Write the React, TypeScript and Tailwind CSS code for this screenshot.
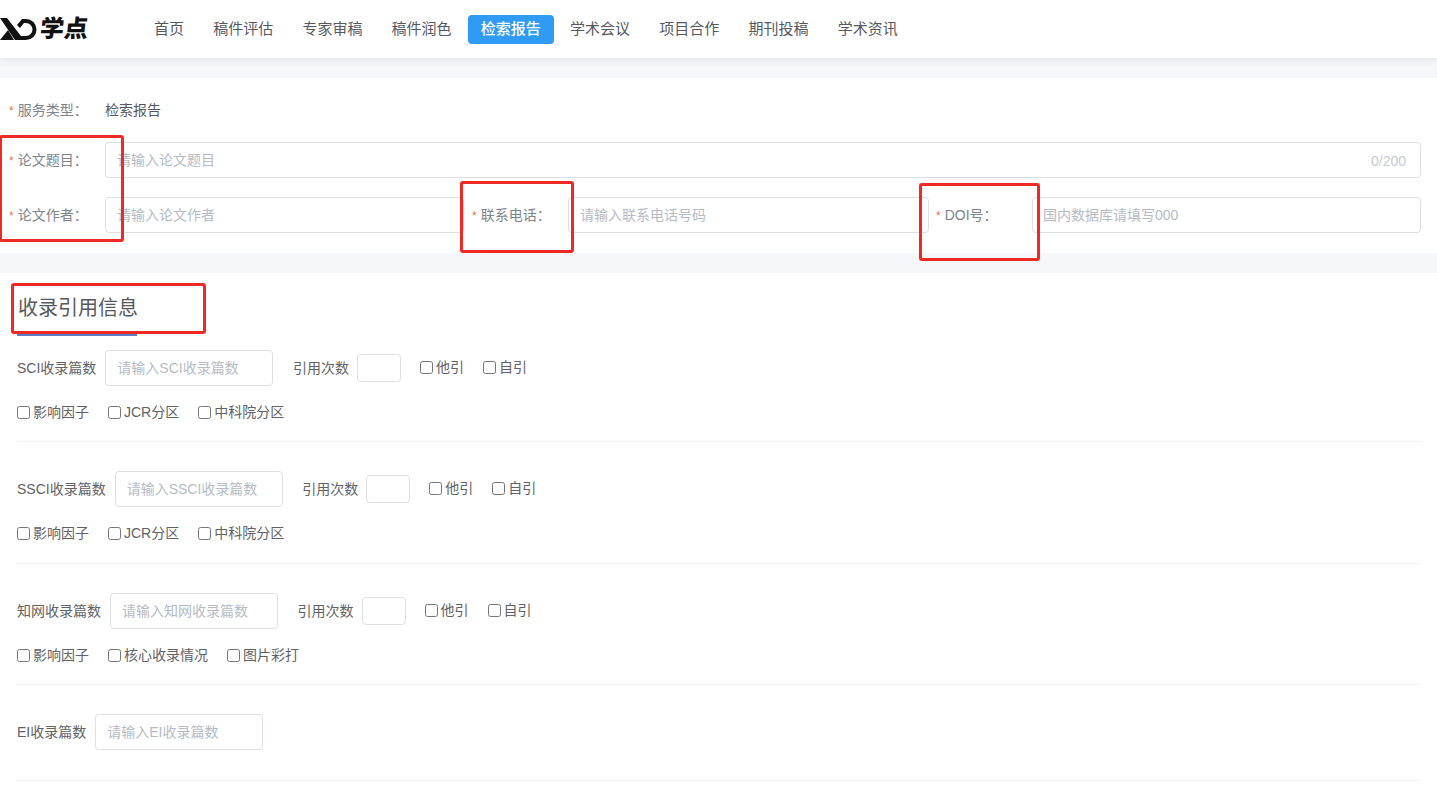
const navItems = ['首页', '稿件评估', '专家审稿', '稿件润色', '检索报告', '学术会议', '项目合作', '期刊投稿', '学术资讯']

interface IBlock {
    label: string
    placeholder: string
    checks: string[]
    bottom: string
}

const blocks: IBlock[] = [
    { label: 'SCI收录篇数', placeholder: '请输入SCI收录篇数', checks: ['影响因子', 'JCR分区', '中科院分区'], bottom: 'pb-[15px]' },
    { label: 'SSCI收录篇数', placeholder: '请输入SSCI收录篇数', checks: ['影响因子', 'JCR分区', '中科院分区'], bottom: 'pb-4' },
    { label: '知网收录篇数', placeholder: '请输入知网收录篇数', checks: ['影响因子', '核心收录情况', '图片彩打'], bottom: 'pb-[15px]' },
]

const inputClass =
    'h-9 rounded border border-[#dcdfe6] bg-white px-[11px] text-sm text-[#606266] outline-none placeholder:text-[#b4bbc4]'

function Logo() {
    return (
        <div className="flex items-center">
            <svg width="40" height="24" viewBox="0 0 40 24" aria-hidden="true">
                <path d="M0 1h7l17 22h-9z" fill="#111" />
                <path d="M0 23l8-10 6 10z" fill="#111" />
                <path d="M17 8l5-6h4a10.500 10.500 0 0 1 0 21h-5l-3-4h8a6.500 6.500 0 0 0 0-13h-2l-4 5z" fill="#111" />
            </svg>
            <span className="-skew-x-6 text-[24px] leading-none font-black text-[#111]">学点</span>
        </div>
    )
}

function Label({ text, width }: { text: string; width: string }) {
    return (
        <div className={`${width} shrink-0 text-sm text-[#7d848c]`}>
            <span className="mr-1 text-xs text-[#e8734a]">*</span>
            {text}：
        </div>
    )
}

function Check({ text }: { text: string }) {
    return (
        <label className="-mt-0.5 flex items-center gap-[3px] text-sm text-[#606266]">
            <input type="checkbox" className="m-0" />
            {text}
        </label>
    )
}

function Block({ label, placeholder, checks, bottom }: IBlock) {
    return (
        <div className={`mb-[29px] border-b border-dotted border-[#e4e7ed] ${bottom}`}>
            <div className="flex h-9 items-center text-sm text-[#606266]">
                <span>{label}</span>
                <input className={`${inputClass} ml-[9px] w-[168px]`} placeholder={placeholder} />
                <span className="ml-[19.6px]">引用次数</span>
                <input className="ml-2 h-7 w-11 rounded border border-[#dcdfe6] outline-none" />
                <div className="ml-[19px] flex gap-[19px]">
                    <Check text="他引" />
                    <Check text="自引" />
                </div>
            </div>
            <div className="mt-3.5 flex h-[26px] items-center gap-[19px]">
                {checks.map((c) => (
                    <Check key={c} text={c} />
                ))}
            </div>
        </div>
    )
}

function RedBox({ className }: { className: string }) {
    return <div className={`absolute rounded-[3px] border-[3px] border-[#ee2a24] ${className}`} />
}

export default function App() {
    return (
        <div className="relative min-h-[799px] overflow-hidden bg-white [font-family:'Liberation_Sans','Noto_Sans_CJK_SC',sans-serif]">
            <header className="relative flex h-[58px] items-center bg-white shadow-[0_2px_8px_rgba(0,0,0,0.08)]">
                <Logo />
                <nav className="ml-[53px] flex gap-[3.2px]">
                    {navItems.map((item) => (
                        <a
                            key={item}
                            className={`flex h-[29px] items-center rounded-sm px-[13px] text-[15px] ${
                                item === '检索报告' ? 'bg-[#2f9bf4] font-medium text-white' : 'text-[#55595f]'
                            }`}
                        >
                            {item}
                        </a>
                    ))}
                </nav>
            </header>
            <div className="h-5 bg-[#f5f7fa]" />

            <section className="pt-3.5 pr-4 pb-5 pl-[9px]">
                <div className="flex h-9 items-center">
                    <Label text="服务类型" width="w-[96px]" />
                    <span className="text-sm text-[#55595f]">检索报告</span>
                </div>
                <div className="mt-3.5 flex items-center">
                    <Label text="论文题目" width="w-[96px]" />
                    <div className="relative flex-1">
                        <input className={`${inputClass} w-full`} placeholder="请输入论文题目" />
                        <span className="absolute top-[9px] right-[15px] text-sm text-[#c6cad1]">0/200</span>
                    </div>
                </div>
                <div className="mt-[19px] flex items-center">
                    <Label text="论文作者" width="w-[96px]" />
                    <input className={`${inputClass} w-[359px]`} placeholder="请输入论文作者" />
                    <div className="ml-2 flex items-center">
                        <Label text="联系电话" width="w-[96px]" />
                        <input className={`${inputClass} w-[361px]`} placeholder="请输入联系电话号码" />
                    </div>
                    <div className="ml-[7px] flex flex-1 items-center">
                        <Label text="DOI号" width="w-[96px]" />
                        <input className={`${inputClass} flex-1 pl-[10px]`} placeholder="国内数据库请填写000" />
                    </div>
                </div>
            </section>
            <div className="h-5 bg-[#f5f7fa]" />

            <section className="pr-4 pl-[17px]">
                <h2 className="mt-[18px] mb-3.5 w-[120px] border-b-[3px] border-[#5b7bc4] pb-[7px] pl-px text-[20px] leading-[35px] font-normal whitespace-nowrap text-[#55595f]">
                    收录引用信息
                </h2>
                {blocks.map((b) => (
                    <Block key={b.label} {...b} />
                ))}
                <div className="border-b border-dotted border-[#e4e7ed] pb-[30px]">
                    <div className="flex h-9 items-center text-sm text-[#606266]">
                        <span>EI收录篇数</span>
                        <input className={`${inputClass} ml-[9px] w-[168px]`} placeholder="请输入EI收录篇数" />
                    </div>
                </div>
            </section>

            {/* annotations drawn on top of the screenshot */}
            <RedBox className="top-[135px] left-[-1px] h-[107px] w-[125px]" />
            <RedBox className="top-[181px] left-[460px] h-[72px] w-[114px]" />
            <RedBox className="top-[183px] left-[919px] h-[78px] w-[121px]" />
            <RedBox className="top-[283px] left-[11px] h-[51px] w-[195px]" />
        </div>
    )
}
